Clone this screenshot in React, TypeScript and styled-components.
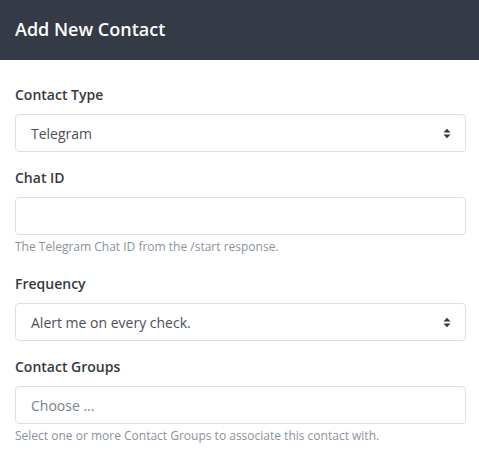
import React from 'react';
import styled, { createGlobalStyle } from 'styled-components';

const GlobalStyle = createGlobalStyle`
  html, body {
    margin: 0;
    padding: 0;
    background: #ffffff;
  }
  body {
    font-family: "Open Sans", "Liberation Sans", sans-serif;
    -webkit-font-smoothing: antialiased;
  }
`;

const SortArrows: React.FC = () => (
  <svg width="8" height="11" viewBox="0 0 8 11">
    <path d="M0.5 4.5 L4 0.8 L7.5 4.5 Z" fill="#343a40" />
    <path d="M0.5 6.5 L4 10.2 L7.5 6.5 Z" fill="#343a40" />
  </svg>
);

const App: React.FC = () => {
  return (
    <StyledModal>
      <GlobalStyle />
      <StyledHeader>Add New Contact</StyledHeader>
      <StyledBody>
        <StyledGroup>
          <StyledLabel>Contact Type</StyledLabel>
          <StyledField>
            <span>Telegram</span>
            <SortArrows />
          </StyledField>
        </StyledGroup>
        <StyledGroup>
          <StyledLabel>Chat ID</StyledLabel>
          <StyledField />
          <StyledHelp>The Telegram Chat ID from the /start response.</StyledHelp>
        </StyledGroup>
        <StyledGroup>
          <StyledLabel>Frequency</StyledLabel>
          <StyledField>
            <span>Alert me on every check.</span>
            <SortArrows />
          </StyledField>
        </StyledGroup>
        <StyledGroup>
          <StyledLabel>Contact Groups</StyledLabel>
          <StyledField placeholder>
            <span>Choose ...</span>
          </StyledField>
          <StyledHelp>Select one or more Contact Groups to associate this contact with.</StyledHelp>
        </StyledGroup>
      </StyledBody>
    </StyledModal>
  );
};

const StyledModal = styled.div`
  width: 479px;
  height: 460px;
  background: #ffffff;
  overflow: hidden;
`;

const StyledHeader = styled.div`
  height: 60px;
  box-sizing: border-box;
  background: #343a46;
  color: #ffffff;
  display: flex;
  align-items: center;
  padding: 0 15px 2px;
  font-size: 18px;
  font-weight: 600;
`;

const StyledBody = styled.div`
  padding: 25px 13px 0 15px;
  display: flex;
  flex-direction: column;
  gap: 16px;
`;

const StyledGroup = styled.div`
  display: flex;
  flex-direction: column;
`;

const StyledLabel = styled.div`
  font-size: 14px;
  line-height: 20px;
  font-weight: 600;
  color: #333a40;
  margin-bottom: 9px;
`;

const StyledField = styled.div<{ placeholder?: boolean }>`
  height: 38px;
  box-sizing: border-box;
  border: 1px solid #dcdfe4;
  border-radius: 4px;
  display: flex;
  align-items: center;
  justify-content: space-between;
  padding: 0 14px 0 15px;
  font-size: 14px;
  color: ${(p) => (p.placeholder ? '#7a8088' : '#4a5058')};
  svg {
    margin-top: 1px;
  }
`;

const StyledHelp = styled.div`
  font-size: 12px;
  line-height: 16px;
  color: #8a939c;
  margin-top: 4px;
  margin-bottom: 3px;
`;

export default App;
